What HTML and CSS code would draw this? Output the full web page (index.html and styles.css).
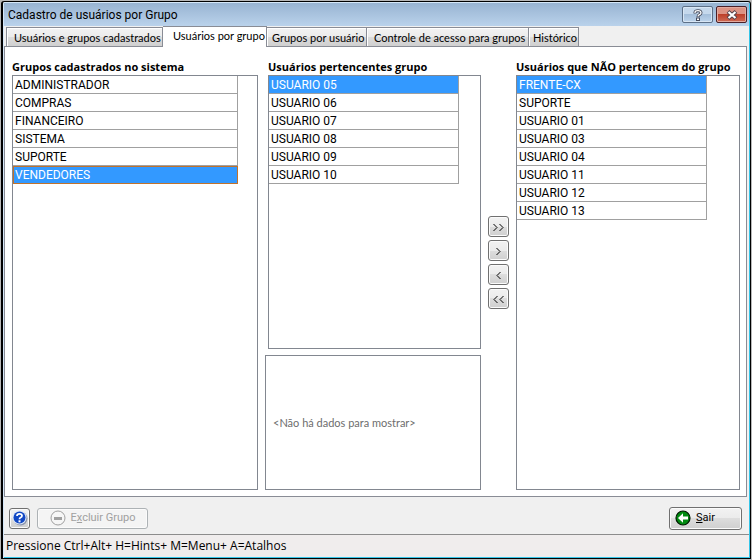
FILE: index.html
```html
<!DOCTYPE html>
<html lang="pt-BR">

<head>
  <meta charset="UTF-8" />
  <meta name="viewport" content="width=device-width, initial-scale=1.0" />
  <title>Cadastro de usuários por Grupo</title>
  <link rel="stylesheet" href="styles.css">
</head>

<body>
  <div class="window">
    <!-- Title bar -->
    <header class="titlebar">
      <h1>Cadastro de usuários por Grupo</h1>
      <button class="caption" type="button" aria-label="Ajuda">
        <svg width="10" height="12" viewBox="0 0 10 12">
          <path d="M2 4.500V3.500Q2.200 1.700 5 1.700T8 3.700Q8 5 6.500 5.700Q5 6.400 5 8" fill="none" stroke="#454b5c" stroke-width="3" />
          <path d="M2 4V3.500Q2.200 1.700 5 1.700T8 3.700Q8 5 6.500 5.700Q5 6.400 5 7.500" fill="none" stroke="#fff" stroke-width="1.300" />
          <rect x="3.500" y="9" width="3" height="2.500" fill="#fff" stroke="#454b5c" />
        </svg>
      </button>
      <button class="caption close" type="button" aria-label="Fechar">
        <svg width="12" height="10" viewBox="0 0 12 10">
          <path d="M2 1.500L10 8.500M10 1.500L2 8.500" stroke="#544049" stroke-width="4" />
          <path d="M2.500 2L9.500 8M9.500 2L2.500 8" stroke="#fff" stroke-width="2.200" />
        </svg>
      </button>
    </header>

    <!-- Tabs -->
    <nav class="tabs" role="tablist">
      <button type="button" role="tab">Usuários e grupos cadastrados</button>
      <button type="button" role="tab" class="active" aria-selected="true">Usuários por grupo</button>
      <button type="button" role="tab">Grupos por usuário</button>
      <button type="button" role="tab">Controle de acesso para grupos</button>
      <button type="button" role="tab">Histórico</button>
    </nav>

    <main class="panel">
      <section class="column">
        <h2 id="grupos">Grupos cadastrados no sistema</h2>
        <div class="list groups">
          <table aria-labelledby="grupos">
            <tr><td>ADMINISTRADOR</td></tr>
            <tr><td>COMPRAS</td></tr>
            <tr><td>FINANCEIRO</td></tr>
            <tr><td>SISTEMA</td></tr>
            <tr><td>SUPORTE</td></tr>
            <tr class="selected focused"><td>VENDEDORES</td></tr>
          </table>
        </div>
      </section>

      <section class="column members">
        <h2 id="membros">Usuários pertencentes grupo</h2>
        <div class="list">
          <table aria-labelledby="membros">
            <tr class="selected"><td>USUARIO 05</td></tr>
            <tr><td>USUARIO 06</td></tr>
            <tr><td>USUARIO 07</td></tr>
            <tr><td>USUARIO 08</td></tr>
            <tr><td>USUARIO 09</td></tr>
            <tr><td>USUARIO 10</td></tr>
          </table>
        </div>
        <div class="empty">&lt;Não há dados para mostrar&gt;</div>
      </section>

      <!-- Move users between the two lists -->
      <div class="arrows">
        <button type="button" aria-label="Mover todos para a direita">
          <svg width="13" height="9" viewBox="0 0 13 9"><path d="M1.500 1L5 4.500L1.500 8M7.500 1L11 4.500L7.500 8" /></svg>
        </button>
        <button type="button" aria-label="Mover para a direita">
          <svg width="7" height="9" viewBox="0 0 7 9"><path d="M1.500 1L5 4.500L1.500 8" /></svg>
        </button>
        <button type="button" aria-label="Mover para a esquerda">
          <svg width="7" height="9" viewBox="0 0 7 9"><path d="M5.500 1L2 4.500L5.500 8" /></svg>
        </button>
        <button type="button" aria-label="Mover todos para a esquerda">
          <svg width="13" height="9" viewBox="0 0 13 9"><path d="M5.500 1L2 4.500L5.500 8M11.500 1L8 4.500L11.500 8" /></svg>
        </button>
      </div>

      <section class="column">
        <h2 id="outros">Usuários que NÃO pertencem do grupo</h2>
        <div class="list others">
          <table aria-labelledby="outros">
            <tr class="selected"><td>FRENTE-CX</td></tr>
            <tr><td>SUPORTE</td></tr>
            <tr><td>USUARIO 01</td></tr>
            <tr><td>USUARIO 03</td></tr>
            <tr><td>USUARIO 04</td></tr>
            <tr><td>USUARIO 11</td></tr>
            <tr><td>USUARIO 12</td></tr>
            <tr><td>USUARIO 13</td></tr>
          </table>
        </div>
      </section>
    </main>

    <footer class="actions">
      <button class="help" type="button" aria-label="Ajuda">
        <svg width="16" height="16" viewBox="0 0 16 16">
          <circle cx="8.500" cy="8.500" r="7" fill="#8b95ad" />
          <circle cx="7.500" cy="7.500" r="7" fill="#dfe8f8" />
          <circle cx="7.500" cy="7.500" r="6" fill="#1248c4" />
          <path d="M5 6Q5 3.800 7.500 3.800T10 5.800Q10 7 8.700 7.500Q7.500 8 7.500 9.200" fill="none" stroke="#fff" stroke-width="1.800" />
          <rect x="6.500" y="10.300" width="2" height="2" fill="#fff" />
        </svg>
      </button>
      <button class="delete" type="button" disabled>
        <svg width="16" height="16" viewBox="0 0 16 16">
          <circle cx="8" cy="8" r="7" fill="#f6f6f6" stroke="#a0a0a0" />
          <rect x="4" y="7" width="8" height="3" fill="#a0a0a0" />
        </svg>
        <span>E<u>x</u>cluir Grupo</span>
      </button>
      <button class="exit" type="button">
        <svg width="16" height="16" viewBox="0 0 16 16">
          <circle cx="8" cy="8" r="7" fill="#008a10" stroke="#001800" stroke-width="1.200" />
          <path d="M3 8L8 3.200V6.500H13V9.500H8V12.800Z" fill="#fff" />
        </svg>
        <span><u>S</u>air</span>
      </button>
    </footer>

    <div class="status">Pressione Ctrl+Alt+ H=Hints+ M=Menu+ A=Atalhos</div>
  </div>
</body>

</html>
```
FILE: styles.css
```css
* {
  box-sizing: border-box;
}

body {
  margin: 0;
  padding: 1px;
  min-height: 100vh;
  display: flex;
  background: #b8b8b8;
  font-family: Roboto, "Liberation Sans", sans-serif;
  font-size: 12px;
  line-height: 16px;
  color: #000;
}

button {
  margin: 0;
  padding: 0;
  font: inherit;
  color: inherit;
}

/* Window frame */
.window {
  flex: 1;
  display: flex;
  flex-direction: column;
  background: #f0f0f0;
  border: 1px solid #000;
  border-left-width: 2px;
  border-radius: 3px 3px 0 0;
  box-shadow: inset 1px 1px #d5e7f8, inset -1px -1px #35c5e8;
  padding: 1px;
}

.titlebar {
  display: flex;
  align-items: center;
  gap: 3px;
  height: 23px;
  padding: 0 2px 0 4px;
  background: linear-gradient(#98b4d2, #bad2eb);
}

.titlebar h1 {
  flex: 1;
  margin: 0;
  font-size: 12px;
  font-weight: normal;
}

.caption {
  display: flex;
  align-items: center;
  justify-content: center;
  width: 31px;
  height: 17px;
  border: 1px solid #5d7088;
  border-radius: 2px;
  background: linear-gradient(#c5d8ec 50%, #a5bfdb 50%, #bdd4ec);
  box-shadow: inset 0 0 0 1px #d8e6f4;
}

.caption.close {
  border-color: #4b2028;
  background: linear-gradient(#dd9384 50%, #bd402b 50%, #cf6b55);
  box-shadow: inset 0 0 0 1px #e3aa9f;
}

/* Tabs */
.tabs {
  display: flex;
  align-items: flex-end;
  height: 20px;
  padding-left: 2px;
}

.tabs button {
  height: 19px;
  padding: 2px 3px 0 7px;
  border: 1px solid #898c95;
  border-left-width: 0;
  border-bottom: none;
  background: linear-gradient(#f3f3f3, #ebebeb 50%, #dcdcdc 50%, #d0d0d0);
  box-shadow: inset 1px 1px #fff;
  font-family: Lato, sans-serif;
  font-size: 11px;
  line-height: 14px;
  text-align: left;
  white-space: nowrap;
}

.tabs button:nth-child(1) {
  width: 157px;
  border-left-width: 1px;
}

.tabs button.active {
  width: 104px;
  height: 21px;
  margin-bottom: -1px;
  padding: 0 0 2px 10px;
  background: #fff;
  z-index: 1;
}

.tabs button:nth-child(3) {
  width: 100px;
  padding-left: 5px;
}

.tabs button:nth-child(4) {
  width: 162px;
}

.tabs button:nth-child(5) {
  width: 50px;
  padding-left: 4px;
}

/* Tab page */
.panel {
  flex: 1;
  display: grid;
  grid-template-columns: 246fr 216fr 21px 224fr;
  gap: 7px;
  margin: 0 2px 0 0;
  padding: 12px 6px 6px 7px;
  background: #fff;
  border: 1px solid #898c95;
}

.column {
  display: flex;
  flex-direction: column;
  min-width: 0;
}

h2 {
  margin: 0;
  font-family: "Open Sans", sans-serif;
  font-size: 11px;
  line-height: 16px;
  font-weight: bold;
  white-space: nowrap;
}

.list {
  flex: 1;
  border: 1px solid #828790;
  padding-right: 21px;
}

.list.groups {
  padding-right: 19px;
}

.list.others {
  padding-right: 32px;
}

.members h2,
.members .list {
  margin-left: 3px;
}

.empty {
  display: flex;
  align-items: center;
  height: 135px;
  margin-top: 6px;
  padding-left: 7px;
  border: 1px solid #828790;
  font-family: Lato, sans-serif;
  font-size: 11px;
  color: #6d6d6d;
}

table {
  width: 100%;
  border-collapse: separate;
  border-spacing: 0;
}

td {
  height: 18px;
  padding: 1px 2px 0;
  line-height: 16px;
  border-right: 1px solid #a0a0a0;
  border-bottom: 1px solid #a0a0a0;
}

.selected td {
  background: #3399ff;
  color: #fff;
}

.focused td {
  padding: 0 1px;
  border: 1px solid #c0722c;
}

/* Push buttons */
.arrows {
  display: flex;
  flex-direction: column;
  gap: 3px;
  padding-top: 157px;
}

.arrows button,
.actions button {
  display: flex;
  align-items: center;
  justify-content: center;
  height: 21px;
  border: 1px solid #707070;
  border-radius: 3px;
  background: linear-gradient(#f2f2f2, #ebebeb 50%, #dddddd 50%, #cfcfcf);
  box-shadow: inset 0 0 0 1px #fbfbfb;
}

.arrows button {
  padding-top: 2px;
}

.arrows path {
  fill: none;
  stroke: #000;
}

.actions {
  display: flex;
  align-items: center;
  gap: 7px;
  height: 37px;
  padding: 5px 7px 0 5px;
}

.actions .help {
  width: 21px;
}

.actions .delete {
  width: 111px;
  gap: 5px;
  background: #f4f4f4;
  border-color: #adb2b5;
  font-size: 11px;
  color: #a0a0a0;
}

.actions .exit {
  justify-content: flex-start;
  gap: 5px;
  width: 73px;
  height: 23px;
  margin-left: auto;
  padding-left: 5px;
  font-size: 11px;
}

.status {
  height: 23px;
  padding: 3px 2px;
  border-top: 1px solid #8c8c8c;
  background: #f0eded;
  font-family: "Open Sans", sans-serif;
}
```
